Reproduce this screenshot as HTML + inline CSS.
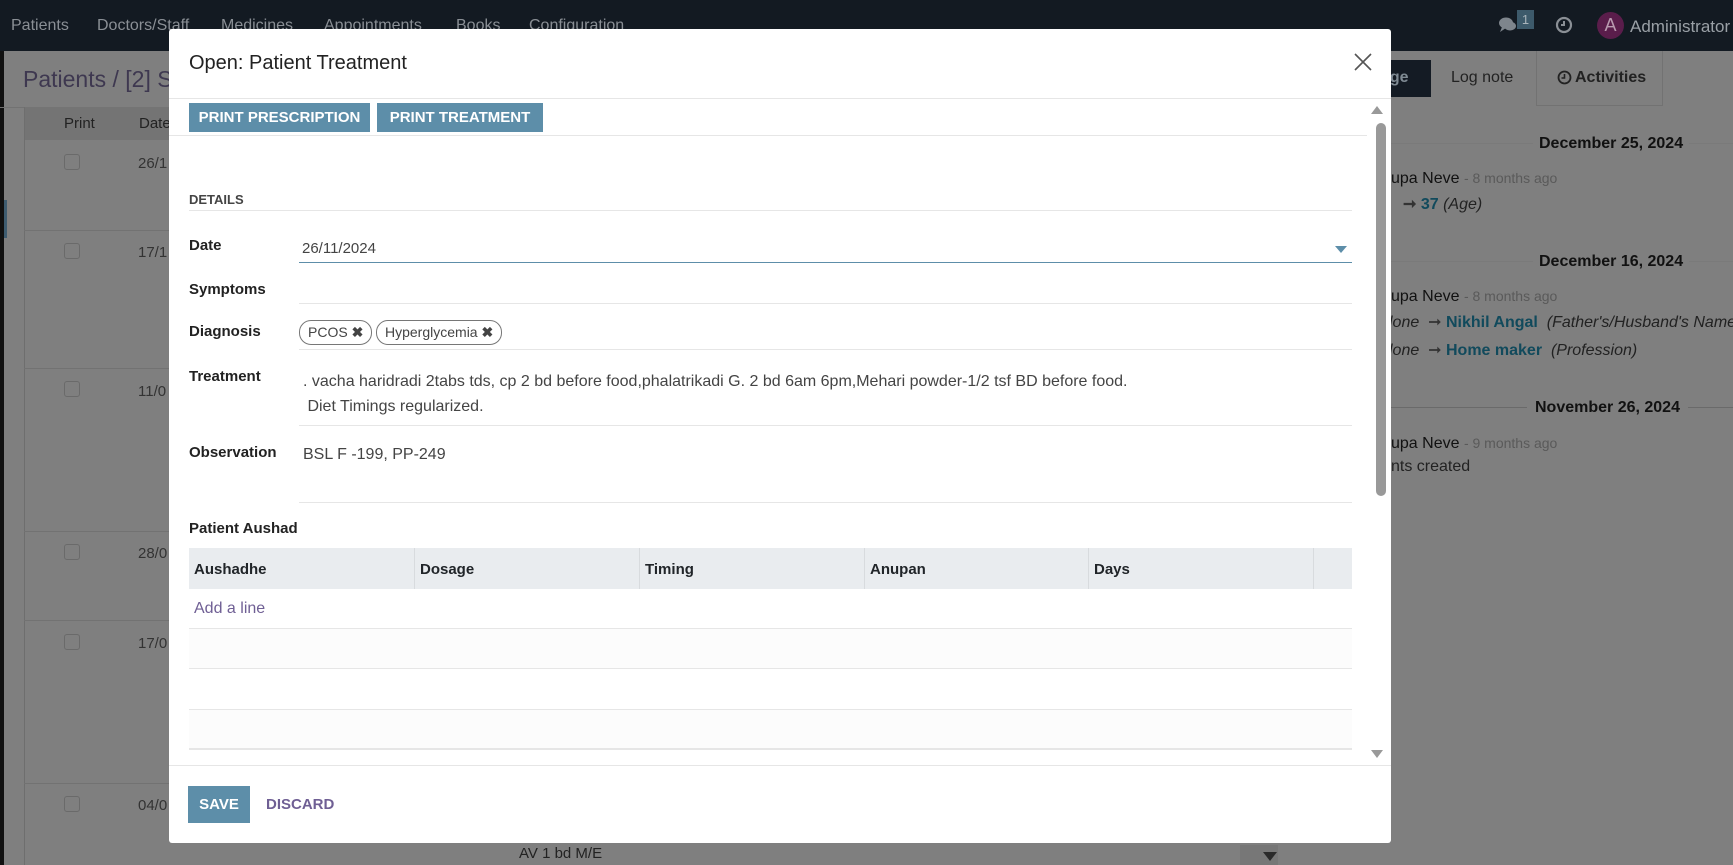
<!DOCTYPE html>
<html><head><meta charset="utf-8">
<style>
*{box-sizing:border-box;margin:0;padding:0}
body{width:1733px;height:865px;overflow:hidden;position:relative;font-family:"Liberation Sans",sans-serif;background:#7f7f7f;font-size:15px;color:#212529}
.a{position:absolute;white-space:nowrap}
.nav{left:0;top:0;width:1733px;height:51px;background:#131a22}
.nav span{position:absolute;top:17px;color:#8a8f95;font-size:16px}
.line{position:absolute;height:1px;background:#e6e6e6}
.bl{position:absolute;height:1px;background:#727272}
.cb{position:absolute;width:16px;height:16px;border:1px solid #6a6a6a;border-radius:3px}
.modal{left:169px;top:29px;width:1222px;height:814px;background:#fff;border-radius:3px}
.lbl{position:absolute;left:20px;font-weight:bold;font-size:15px;color:#222}
.btn{position:absolute;background:#5d8ea9;color:#fff;font-weight:bold;font-size:15px;text-align:center}
.tag{position:absolute;border:1px solid #777;border-radius:12px;height:25px;padding:3px 8px;font-size:14px;color:#444}
.th{position:absolute;top:0;height:41px;border-left:1px solid #d8dbde;padding:13px 5px;font-weight:bold;font-size:15px}
</style></head><body>
<div class="a nav">
<span style="left:11px">Patients</span><span style="left:97px">Doctors/Staff</span><span style="left:221px">Medicines</span><span style="left:324px">Appointments</span><span style="left:456px">Books</span><span style="left:529px">Configuration</span>
<svg class="a" style="left:1498px;top:16px" width="20" height="18" viewBox="0 0 20 18"><ellipse cx="8" cy="7" rx="7" ry="5.5" fill="#7e858c"/><ellipse cx="12" cy="10" rx="6" ry="4.5" fill="#7e858c"/><path d="M4 11 L2 16 L8 12Z" fill="#7e858c"/></svg>
<div class="a" style="left:1517px;top:10px;width:17px;height:19px;background:#3d5a6b;color:#a9b4bb;font-size:13px;text-align:center;line-height:19px">1</div>
<svg class="a" style="left:1555px;top:16px" width="18" height="18" viewBox="0 0 18 18"><circle cx="9" cy="9" r="7" fill="none" stroke="#8a8f95" stroke-width="2.2"/><path d="M9 5v4h-3" fill="none" stroke="#8a8f95" stroke-width="2"/></svg>
<div class="a" style="left:1597px;top:12px;width:27px;height:27px;border-radius:50%;background:#5a1d4b;color:#b99ab0;text-align:center;line-height:27px;font-size:18px">A</div>
<span style="left:1630px;color:#9aa0a6;font-size:17px">Administrator</span>
</div>
<div class="a" style="left:0;top:51px;width:4px;height:814px;background:#111"></div>
<div class="a" style="left:4px;top:200px;width:3px;height:38px;background:#3e5c70"></div>
<div class="a" style="left:23px;top:66px;font-size:23px;color:#3e3850">Patients / [2] S</div>
<div class="a" style="left:0;top:107px;width:1260px;height:1px;background:#727272"></div>
<div class="a" style="left:24px;top:107px;width:1240px;height:33px;background:#747474"></div>
<div class="a" style="left:24px;top:107px;width:1px;height:758px;background:#6e6e6e"></div>
<div class="a" style="left:64px;top:115px;font-size:15px;color:#222">Print</div>
<div class="a" style="left:139px;top:115px;font-size:15px;color:#222">Date</div>
<div class="bl" style="left:24px;top:230px;width:150px"></div><div class="bl" style="left:24px;top:368px;width:150px"></div><div class="bl" style="left:24px;top:531px;width:150px"></div><div class="bl" style="left:24px;top:620px;width:150px"></div><div class="bl" style="left:24px;top:783px;width:150px"></div>
<div class="cb" style="left:64px;top:154px"></div><div class="cb" style="left:64px;top:243px"></div><div class="cb" style="left:64px;top:381px"></div><div class="cb" style="left:64px;top:544px"></div><div class="cb" style="left:64px;top:634px"></div><div class="cb" style="left:64px;top:796px"></div>
<div class="a" style="left:138px;top:155px;color:#333">26/1</div><div class="a" style="left:138px;top:244px;color:#333">17/1</div><div class="a" style="left:138px;top:383px;color:#333">11/0</div><div class="a" style="left:138px;top:545px;color:#333">28/0</div><div class="a" style="left:138px;top:635px;color:#333">17/0</div><div class="a" style="left:138px;top:797px;color:#333">04/0</div>
<div class="a" style="left:519px;top:845px;color:#222;font-size:15px">AV 1 bd M/E</div>
<div class="a" style="left:1240px;top:845px;width:38px;height:20px;background:#777"></div>
<svg class="a" style="left:1263px;top:852px" width="14" height="9"><path d="M0 0h14L7 9z" fill="#2a2a2a"/></svg>
<div class="a" style="left:1381px;top:60px;width:50px;height:37px;background:#141b24;color:#7f8a93;font-weight:bold;font-size:16px;padding:9px 0 0 0">age</div>
<div class="a" style="left:1451px;top:69px;font-size:16px;color:#222">Log note</div>
<div class="a" style="left:1536px;top:51px;width:127px;height:55px;border-left:1px solid #727272;border-right:1px solid #727272;border-bottom:1px solid #727272"></div>
<svg class="a" style="left:1557px;top:70px" width="15" height="15"><circle cx="7.5" cy="7.5" r="6" fill="none" stroke="#222" stroke-width="1.8"/><path d="M7.5 4v4h-3" fill="none" stroke="#222" stroke-width="1.6"/></svg>
<div class="a" style="left:1575px;top:69px;font-size:16px;color:#222;font-weight:bold">Activities</div>
<div class="bl" style="left:1391px;top:143px;width:342px;background:#7a7a7a"></div>
<div class="a" style="left:1533px;top:135px;font-weight:bold;color:#111;padding:0 6px;background:#7f7f7f;font-size:16px">December 25, 2024</div>
<div class="a" style="left:1391px;top:170px;color:#111;font-size:16px">upa Neve <span style="color:#5a5a5a;font-size:14px">- 8 months ago</span></div>
<div class="a" style="left:1403px;top:194px;color:#114a5c;font-weight:bold;font-size:16px"><span style="color:#333">➞</span> 37 <i style="color:#222;font-weight:normal">(Age)</i></div>
<div class="bl" style="left:1391px;top:261px;width:342px;background:#7a7a7a"></div>
<div class="a" style="left:1533px;top:253px;font-weight:bold;color:#111;padding:0 6px;background:#7f7f7f;font-size:16px">December 16, 2024</div>
<div class="a" style="left:1391px;top:288px;color:#111;font-size:16px">upa Neve <span style="color:#5a5a5a;font-size:14px">- 8 months ago</span></div>
<div class="a" style="left:1389px;top:312px;color:#222;font-size:16px"><i>lone</i> &nbsp;<span style="color:#333">➞</span> <b style="color:#114a5c">Nikhil Angal</b> &nbsp;<i>(Father's/Husband's Name</i></div>
<div class="a" style="left:1389px;top:340px;color:#222;font-size:16px"><i>lone</i> &nbsp;<span style="color:#333">➞</span> <b style="color:#114a5c">Home maker</b> &nbsp;<i>(Profession)</i></div>
<div class="bl" style="left:1391px;top:407px;width:342px;background:#6a6a6a"></div>
<div class="a" style="left:1527px;top:399px;font-weight:bold;color:#111;padding:0 8px;background:#7f7f7f;font-size:16px">November 26, 2024</div>
<div class="a" style="left:1391px;top:435px;color:#111;font-size:16px">upa Neve <span style="color:#5a5a5a;font-size:14px">- 9 months ago</span></div>
<div class="a" style="left:1391px;top:458px;color:#222;font-size:16px">nts created</div>
<div class="a modal">
<div class="a" style="left:20px;top:23px;font-size:20px;color:#222">Open: Patient Treatment</div>
<svg class="a" style="left:1185px;top:24px" width="18" height="18"><path d="M1 1L17 17M17 1L1 17" stroke="#555" stroke-width="1.6"/></svg>
<div class="line" style="left:0;top:69px;width:1222px"></div>
<div class="btn" style="left:20px;top:74px;width:181px;height:29px;line-height:29px">PRINT PRESCRIPTION</div>
<div class="btn" style="left:208px;top:74px;width:166px;height:29px;line-height:29px">PRINT TREATMENT</div>
<div class="line" style="left:0;top:106px;width:1198px"></div>
<svg class="a" style="left:1202px;top:76px" width="12" height="9"><path d="M0 9L6 1L12 9z" fill="#999"/></svg>
<div class="a" style="left:1207px;top:94px;width:10px;height:373px;border-radius:5px;background:#999"></div>
<svg class="a" style="left:1202px;top:721px" width="12" height="9"><path d="M0 0L6 8L12 0z" fill="#999"/></svg>
<div class="a" style="left:20px;top:163px;font-weight:bold;font-size:13px;color:#444">DETAILS</div>
<div class="line" style="left:20px;top:181px;width:1163px"></div>
<div class="lbl" style="top:208px">Date</div>
<div class="a" style="left:133px;top:211px;color:#444">26/11/2024</div>
<svg class="a" style="left:1166px;top:217px" width="12" height="7"><path d="M0 0h12L6 7z" fill="#5d8ea9"/></svg>
<div class="a" style="left:130px;top:233px;width:1053px;height:1px;background:#5d8ea9"></div>
<div class="lbl" style="top:252px">Symptoms</div>
<div class="line" style="left:130px;top:274px;width:1053px"></div>
<div class="lbl" style="top:294px">Diagnosis</div>
<div class="tag" style="left:130px;top:291px">PCOS <b>✖</b></div>
<div class="tag" style="left:207px;top:291px">Hyperglycemia <b>✖</b></div>
<div class="line" style="left:130px;top:320px;width:1053px"></div>
<div class="lbl" style="top:339px">Treatment</div>
<div class="a" style="left:134px;top:340px;color:#444;line-height:25px;font-size:16px">. vacha haridradi 2tabs tds, cp 2 bd before food,phalatrikadi G. 2 bd 6am 6pm,Mehari powder-1/2 tsf BD before food.<br>&nbsp;Diet Timings regularized.</div>
<div class="line" style="left:130px;top:396px;width:1053px"></div>
<div class="lbl" style="top:415px">Observation</div>
<div class="a" style="left:134px;top:417px;color:#444;font-size:16px">BSL F -199, PP-249</div>
<div class="line" style="left:130px;top:473px;width:1053px"></div>
<div class="lbl" style="top:491px">Patient Aushad</div>
<div class="a" style="left:20px;top:519px;width:1163px;height:41px;background:#e9ecef">
<div class="th" style="left:0;width:225px;border-left:none">Aushadhe</div>
<div class="th" style="left:225px;width:225px">Dosage</div>
<div class="th" style="left:450px;width:225px">Timing</div>
<div class="th" style="left:675px;width:224px">Anupan</div>
<div class="th" style="left:899px;width:225px">Days</div>
<div class="th" style="left:1124px;width:39px"></div>
</div>
<div class="a" style="left:25px;top:571px;color:#6f5f94;font-size:16px">Add a line</div>
<div class="a" style="left:20px;top:599px;width:1163px;height:41px;background:#fcfcfc;border-top:1px solid #e6e6e6;border-bottom:1px solid #e6e6e6"></div>
<div class="a" style="left:20px;top:680px;width:1163px;height:41px;background:#fcfcfc;border-top:1px solid #e6e6e6;border-bottom:2px solid #e6e6e6"></div>
<div class="line" style="left:0;top:736px;width:1222px"></div>
<div class="btn" style="left:19px;top:757px;width:62px;height:37px;line-height:37px">SAVE</div>
<div class="a" style="left:97px;top:767px;color:#6f5f94;font-weight:bold;font-size:15px">DISCARD</div>
</div>
</body></html>
